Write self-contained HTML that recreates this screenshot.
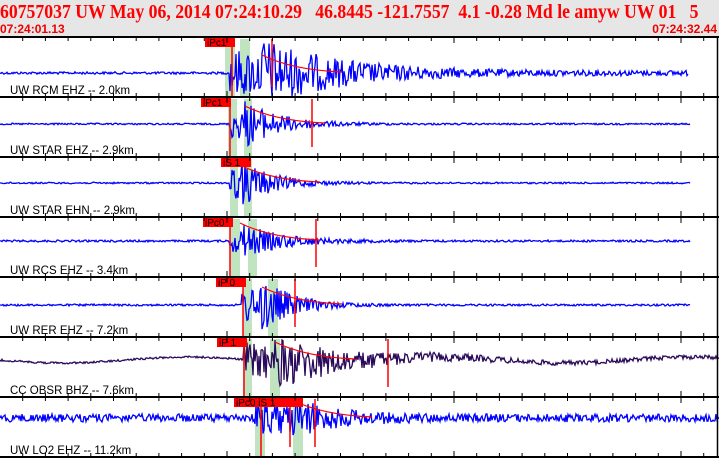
<!DOCTYPE html>
<html><head><meta charset="utf-8"><style>
body{margin:0;width:719px;height:458px;overflow:hidden;background:#fff}
#h{position:absolute;left:0;top:0;width:719px;height:37px;background:#e6e6e6;overflow:hidden}
.t{position:absolute;left:0;top:1px;font:bold 20px "Liberation Serif",serif;color:#f00;white-space:pre;transform:scaleX(0.885);transform-origin:0 0}
.s{position:absolute;top:22px;font:bold 12px "Liberation Sans",sans-serif;color:#e00}
svg{position:absolute;left:0;top:0}
</style></head><body>
<div id="h"><div class="t">60757037 UW May 06, 2014 07:24:10.29   46.8445 -121.7557  4.1 -0.28 Md le amyw UW 01   5</div>
<div class="s" style="left:0">07:24:01.13</div><div class="s" style="right:2px">07:24:32.44</div></div>
<svg id="g" width="719" height="458" xmlns="http://www.w3.org/2000/svg"></svg>
<script>
var s=12345;function r(){s=(s*1103515245+12345)%2147483648;return s/2147483648-0.5;}
var P=[
{T:37,b:73,on:230,S:262,A:34,n:1.2,dk:75,fl:2.5,end:688,box:[205,"iPc1"],g:[225,235,240,250],rv:[232,272],lbl:"UW RCM EHZ -- 2.0km",c:"#00f"},
{T:97,b:124,on:230,S:245,A:24,n:0.8,dk:35,fl:0.8,end:690,box:[201,"iPc1"],g:[228,237,244,252],rv:[230,312],lbl:"UW STAR EHZ -- 2.9km",c:"#00f"},
{T:157,b:183,on:230,S:240,A:26,n:0.8,dk:30,fl:0.8,end:690,box:[221,"iS 1"],g:[230,238,244,252],rv:[],lbl:"UW STAR EHN -- 2.9km",c:"#00f"},
{T:217,b:241,on:230,S:240,A:18,n:1,dk:40,fl:1,end:690,box:[203,"iPc0"],g:[230,240,248,257],rv:[230,316],lbl:"UW RCS EHZ -- 3.4km",c:"#00f"},
{T:277,b:305,on:242,S:262,A:28,n:1,dk:30,fl:1,end:690,box:[216,"iP 0"],g:[243,252,268,278],rv:[243,295],lbl:"UW RER EHZ -- 7.2km",c:"#00f"},
{T:337,b:360,on:244,S:275,A:26,n:1,dk:70,fl:2,end:719,box:[217,"iP 1"],g:[243,252,270,280],rv:[244,388],lbl:"CC OBSR BHZ -- 7.6km",c:"#2a0a5a",sl:1},
{T:397,b:418,on:255,S:292,A:20,n:4,dk:40,fl:4,end:719,box:[234,"iPc0  iS 1"],g:[255,265,293,303],rv:[261,290,315],lbl:"UW LO2 EHZ -- 11.2km",c:"#00f"}];
var o="";
P.forEach(function(p){
 for(var i=0;i<4;i+=2)o+='<rect x="'+p.g[i]+'" y="'+(p.T+2)+'" width="'+(p.g[i+1]-p.g[i])+'" height="58" fill="#bfe4bf"/>';
 var d="M0 "+p.b;
 for(var x=1;x<=p.end;x+=1){var a=p.n;
  if(x>=p.on){var t=x<p.S?0.6:Math.exp(-(x-p.S)/p.dk);a=p.A*t+p.fl;}
  var base=p.b;if(p.sl)base=p.b+3*Math.sin(x/40);
  var y=base+r()*2*a;y=Math.max(p.T+3,Math.min(p.T+59,y));d+="L"+x+" "+y.toFixed(1);}
 o+='<path d="'+d+'" fill="none" stroke="'+p.c+'" stroke-width="1.3"/>';
 p.rv.forEach(function(x,i){o+='<line x1="'+x+'" y1="'+(p.T+2)+'" x2="'+x+'" y2="'+(p.T+(i?50:60))+'" stroke="#f00" stroke-width="1.5"/>';});
 o+='<path d="M'+(p.S)+' '+(p.b-18)+' Q'+(p.S+30)+' '+(p.b-3)+' '+(p.S+80)+' '+(p.b-1)+'" fill="none" stroke="#f00" stroke-width="1.2"/>';
 var w=p.box[1].length*6.5+4;
 o+='<rect x="'+p.box[0]+'" y="'+(p.T+1)+'" width="'+w+'" height="9" fill="#f00"/><text x="'+(p.box[0]+2)+'" y="'+(p.T+9)+'" font-family="Liberation Sans,sans-serif" font-size="10" fill="#000">'+p.box[1]+'</text>';
 o+='<text x="10" y="'+(p.T+57)+'" font-family="Liberation Sans,sans-serif" font-size="11.5" fill="#000">'+p.lbl+'</text>';
});
for(var k=0;k<8;k++){var y=37+k*60;o+='<line x1="0" y1="'+y+'" x2="719" y2="'+y+'" stroke="#000" stroke-width="2"/>';
 for(var x=22.7;x<717;x+=22.7){var L=(Math.round(x/22.7)%10==0)?6:4;
  if(k<7)o+='<line x1="'+x+'" y1="'+y+'" x2="'+x+'" y2="'+(y+L)+'" stroke="#000"/>';
  if(k>0)o+='<line x1="'+x+'" y1="'+y+'" x2="'+x+'" y2="'+(y-L)+'" stroke="#000"/>';}}
o+='<line x1="717.5" y1="37" x2="717.5" y2="458" stroke="#000" stroke-width="1.5"/>';
document.getElementById("g").innerHTML=o;
</script>
</body></html>
